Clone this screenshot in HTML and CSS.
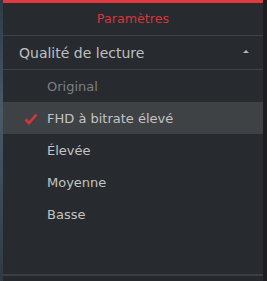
FILE: index.html
```html
<!DOCTYPE html>
<html lang="fr">
<head>
    <meta charset="UTF-8">
    <title>Paramètres</title>
    <link rel="stylesheet" href="styles.css">
</head>
<body>
    <div class="backdrop"></div>
    <div class="settings">
        <div class="settings-title">Paramètres</div>
        <div class="section-head">
            <span>Qualité de lecture</span>
            <span class="caret"></span>
        </div>
        <ul class="options">
            <li class="option disabled">Original</li>
            <li class="option active">
                <svg class="check" width="14" height="12" viewBox="0 0 14 12">
                    <path d="M1.5 6.5 L5 10 L12.5 1.5" fill="none" stroke="#d8353b" stroke-width="2.6"/>
                </svg>
                FHD à bitrate élevé
            </li>
            <li class="option">Élevée</li>
            <li class="option">Moyenne</li>
            <li class="option">Basse</li>
        </ul>
        <div class="settings-foot"></div>
    </div>
    <div class="edge"></div>
</body>
</html>
```
FILE: styles.css
```css
body {
    margin: 0;
    padding: 0;
    display: flex;
    height: 281px;
    overflow: hidden;
    background-color: #1d2023;
    font-family: "DejaVu Sans", Verdana, sans-serif;
}

.backdrop {
    width: 3px;
    background: linear-gradient(#2e3b47, #4a5a68 40%, #2f3a44);
}

.settings {
    width: 260px;
    display: flex;
    flex-direction: column;
    background-color: #272a2e;
    border-top: 3px solid #e0393e;
}

.settings-title {
    height: 33px;
    line-height: 31px;
    text-align: center;
    color: #d8353b;
    font-size: 12.7px;
    border-bottom: 1px solid #3d4044;
    box-sizing: border-box;
}

.section-head {
    height: 34px;
    display: flex;
    align-items: center;
    justify-content: space-between;
    padding: 0 14px 0 16px;
    color: #bfc0c1;
    font-size: 14px;
    border-bottom: 1px solid #3d4044;
    box-sizing: border-box;
}

.caret {
    width: 0;
    height: 0;
    border-left: 3px solid transparent;
    border-right: 3px solid transparent;
    border-bottom: 3px solid #b5b6b7;
    margin-bottom: 2px;
}

.options {
    list-style: none;
    margin: 0;
    padding: 0;
    flex-grow: 1;
}

.option {
    position: relative;
    height: 32px;
    line-height: 34px;
    padding-left: 44px;
    color: #c3c4c5;
    font-size: 13px;
}

.option.disabled {
    color: #7d8084;
}

.option.active {
    background-color: #3f4245;
}

.check {
    position: absolute;
    left: 21px;
    top: 11px;
}

.settings-foot {
    height: 5px;
    border-top: 2px solid #3a3d41;
    background-color: #25282c;
}

.edge {
    flex-grow: 1;
    background-color: #1b1d20;
}
```
